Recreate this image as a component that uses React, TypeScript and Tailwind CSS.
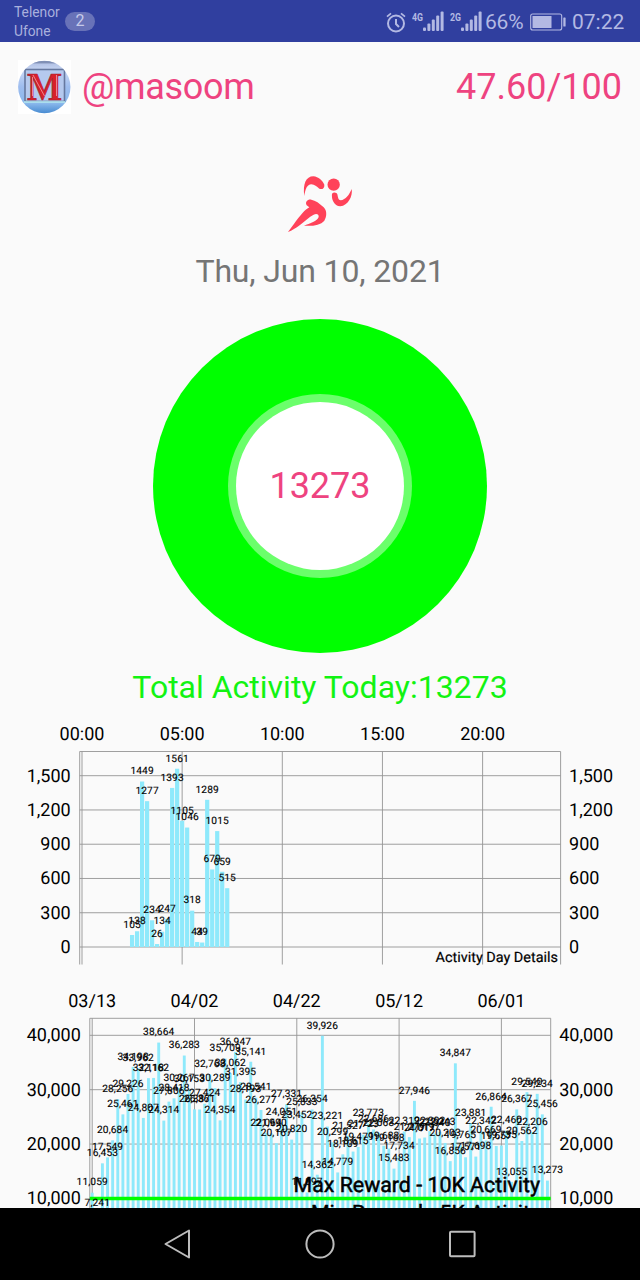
import type { ReactNode } from "react";

const DAY_START = 2.5;
const DAY_VALUES = [
  105, 138, 1449, 1277, 234, 26, 134, 247, 1393, 1561,
  1105, 1046, 318, 44, 39, 1289, 679, 1015, 659, 515,
];

const MONTH_VALUES = [
  11059, 7241, 16453, 17549, 20684, 28256, 25461, 29226, 34198, 33962,
  24807, 32118, 32162, 38664, 24314, 27806, 28418, 30267, 36283, 30153,
  26387, 26361, 27424, 32768, 30289, 24354, 35709, 33062, 36947, 31395,
  28193, 35141, 28541, 26277, 22064, 21990, 20167, 24051, 27331, 20820,
  23452, 25833, 11097, 26354, 14362, 39926, 23221, 20299, 14779, 18109,
  21527, 18615, 19479, 21723, 23773, 22686, 22063, 19683, 19168, 15483,
  17734, 22319, 21279, 27946, 21017, 21197, 22392, 21940, 22243, 20203,
  16856, 34847, 19765, 17571, 23881, 17698, 22342, 20669, 26864, 19657,
  19735, 22460, 13055, 26367, 20562, 29540, 22206, 29234, 25456, 13273,
];

type Tick = { at: number; label: string };

type ChartProps = {
  top: number;
  height: number;
  box: { left: number; right: number; top: number; bottom: number };
  xTicks: Tick[];
  yTicks: Tick[];
  bars: { x: number; y: number; label: string }[];
  barWidth: number;
  zero: number;
  children?: ReactNode;
};

function BarChart({ top, height, box, xTicks, yTicks, bars, barWidth, zero, children }: ChartProps) {
  return (
    <svg
      width="640"
      height={height}
      viewBox={`0 ${top} 640 ${height}`}
      className="block shrink-0"
      textRendering="geometricPrecision"
    >
      <g stroke="#949494" strokeWidth="0.9">
        {xTicks.map((t) => (
          <line key={t.label} x1={t.at} x2={t.at} y1={box.top} y2={box.bottom} />
        ))}
        {yTicks.map((t) => (
          <line key={t.label} x1={box.left} x2={box.right} y1={t.at} y2={t.at} />
        ))}
        <path
          d={`M${box.left} ${box.bottom}V${box.top}H${box.right}V${box.bottom}`}
          fill="none"
        />
      </g>

      <g fill="#8ee9fb">
        {bars.map((b) => (
          <rect key={b.x} x={b.x - barWidth / 2} y={b.y} width={barWidth} height={zero - b.y} />
        ))}
      </g>

      {children}

      <g fontSize="10.2" fill="#000" stroke="#000" strokeWidth="0.12" letterSpacing="0.1" textAnchor="middle">
        {bars.map((b) => (
          <text key={b.x} x={b.x} y={b.y - 7.2}>{b.label}</text>
        ))}
      </g>

      <g fontSize="18" fill="#000">
        {xTicks.map((t) => (
          <text key={t.label} x={t.at} y={box.top - 11.5} textAnchor="middle">{t.label}</text>
        ))}
        {yTicks.map((t) => (
          <g key={t.label}>
            <text x={box.left - 9} y={t.at + 6} textAnchor="end">{t.label}</text>
            <text x={box.right + 8.5} y={t.at + 6}>{t.label}</text>
          </g>
        ))}
      </g>
    </svg>
  );
}

function DayChart() {
  const y = (v: number) => 947 - v * 0.1142;
  return (
    <BarChart
      top={714}
      height={261}
      box={{ left: 79.7, right: 560.6, top: 751.5, bottom: 964.5 }}
      xTicks={[0, 5, 10, 15, 20].map((h) => ({
        at: 82 + h * 20.03,
        label: `${String(h).padStart(2, "0")}:00`,
      }))}
      yTicks={[0, 300, 600, 900, 1200, 1500].map((v) => ({ at: y(v), label: v.toLocaleString("en-US") }))}
      bars={DAY_VALUES.map((v, i) => ({
        x: 82 + (DAY_START + i * 0.25) * 20.03,
        y: y(v),
        label: String(v),
      }))}
      barWidth={4.2}
      zero={947}
    >
      <text
        x="435.5"
        y="962"
        fontSize="14.2"
        fill="#000"
        stroke="#000"
        strokeWidth="0.2"
        textLength="122.5"
        lengthAdjust="spacingAndGlyphs"
      >
        Activity Day Details
      </text>
    </BarChart>
  );
}

function MonthChart() {
  const y = (v: number) => 1252.8 - v * 0.005437;
  return (
    <BarChart
      top={975}
      height={290}
      box={{ left: 89.8, right: 550.7, top: 1018.3, bottom: 1265 }}
      xTicks={["03/13", "04/02", "04/22", "05/12", "06/01"].map((label, i) => ({
        at: 92.2 + i * 102.3,
        label,
      }))}
      yTicks={[10000, 20000, 30000, 40000].map((v) => ({ at: y(v), label: v.toLocaleString("en-US") }))}
      bars={MONTH_VALUES.map((v, i) => ({
        x: 92.2 + i * 5.115,
        y: y(v),
        label: v.toLocaleString("en-US"),
      }))}
      barWidth={2.9}
      zero={1252.8}
    >
      <line x1="89.8" x2="550.7" y1="1198.5" y2="1198.5" stroke="#00ff00" strokeWidth="3.6" />
      <g fontSize="21.2" fill="#000" stroke="#000" strokeWidth="0.5">
        <text x="293.5" y="1192.3" textLength="246.5" lengthAdjust="spacingAndGlyphs">
          Max Reward - 10K Activity
        </text>
        <text x="311" y="1219.5" textLength="229" lengthAdjust="spacingAndGlyphs">
          Min Reward - 5K Activity
        </text>
      </g>
    </BarChart>
  );
}

function Signal({ kind }: { kind: string }) {
  return (
    <svg width="33" height="24" viewBox="0 0 33 24" fill="#b3b9e3" className="block">
      <text x="0" y="10.5" fontSize="11" fontWeight="700" textLength="11" lengthAdjust="spacingAndGlyphs">
        {kind}
      </text>
      <rect x="11" y="17.5" width="3" height="3.5" rx="1" />
      <rect x="15.4" y="13.5" width="3" height="7.5" rx="1" />
      <rect x="19.8" y="9.5" width="3" height="11.5" rx="1" />
      <rect x="24.2" y="5.5" width="3" height="15.5" rx="1" />
      <rect x="28.6" y="1.5" width="3" height="19.5" rx="1" />
    </svg>
  );
}

function StatusBar() {
  return (
    <header className="flex h-[42px] shrink-0 items-center justify-between bg-[#303f9f] pr-[15px] pl-3.5 text-[#b3b9e3]">
      <div className="flex items-center">
        <div className="w-[51px] pt-0.5 text-[13.8px] leading-[19.5px] text-[#a9b0dd]">
          <div>Telenor</div>
          <div>Ufone</div>
        </div>
        <div className="grid h-[19px] w-[30px] place-content-center rounded-full bg-[#6872b8] text-[16px] leading-none text-[#c6caea]">
          2
        </div>
      </div>

      <div className="flex items-center pt-[2px] text-[21px]">
        <svg width="20" height="21" viewBox="0 0 20 21" fill="none" stroke="#b3b9e3" strokeWidth="2" className="mr-[6px] block">
          <circle cx="10" cy="11.5" r="8" />
          <path d="M10 7v5l3 3" />
          <path d="M1 4.6 5 1.4M19 4.6 15 1.4" strokeWidth="1.8" />
        </svg>
        <Signal kind="4G" />
        <div className="w-[5px]" />
        <Signal kind="2G" />
        <span className="ml-[2px] w-[45px] leading-none tracking-[-0.2px] whitespace-nowrap">66%</span>
        <svg width="36" height="18" viewBox="0 0 36 18" className="mr-[6px] block">
          <rect x="0.7" y="1" width="31" height="16" rx="2" fill="none" stroke="#b3b9e3" strokeWidth="1.1" />
          <rect x="2.5" y="3" width="19" height="12" fill="#b3b9e3" />
          <rect x="33.3" y="4.5" width="2.3" height="9" rx="0.6" fill="#b3b9e3" />
        </svg>
        <span className="w-[53px] leading-none whitespace-nowrap">07:22</span>
      </div>
    </header>
  );
}

function Avatar() {
  return (
    <svg width="53" height="54" viewBox="0 0 53 54" className="block bg-white">
      <defs>
        <linearGradient id="sky" x1="0" y1="0" x2="0" y2="1">
          <stop offset="0" stopColor="#a9b8de" />
          <stop offset="0.2" stopColor="#c9d8f5" />
          <stop offset="0.5" stopColor="#9dbcee" />
          <stop offset="0.8" stopColor="#8bb8ec" />
          <stop offset="1" stopColor="#4288cf" />
        </linearGradient>
        <clipPath id="round">
          <circle cx="26.3" cy="27" r="26.2" />
        </clipPath>
      </defs>
      <g clipPath="url(#round)">
        <rect width="53" height="54" fill="url(#sky)" />
        <rect x="5" y="1" width="43" height="2.4" fill="#8090b5" />
        <rect x="7" y="9.5" width="39.5" height="32" fill="#b5c9ee" stroke="#66789f" strokeWidth="1.6" />
        <path d="M6 42h41" stroke="#b9f0f8" strokeWidth="1.6" />
      </g>
      <text
        x="26.5"
        y="39.5"
        fontFamily="Liberation Serif, serif"
        fontSize="40"
        fontWeight="700"
        textAnchor="middle"
        textLength="35"
        lengthAdjust="spacingAndGlyphs"
        fill="#d8202c"
        stroke="#a3222f"
        strokeWidth="0.7"
      >
        M
      </text>
      <path d="M15 15l11.5 21M38.5 15v21M14.5 17v19" stroke="#efa2aa" strokeWidth="0.8" fill="none" />
    </svg>
  );
}

function Runner() {
  return (
    <svg width="100" height="90" viewBox="0 0 300 270" fill="#ff4259" className="block">
      <path d="M103 108C98 72 108 49 130 49C146 51 157 61 163 74C164 85 156 90 148 86C140 80 134 74 124 73C111 74 106 87 103 108Z" />
      <circle cx="191" cy="74" r="18.5" />
      <path d="M186 101C191 95 200 97 202 103C204 112 205 121 212 121C227 119 238 104 245 87C249 108 234 137 211 139C191 137 184 117 186 101Z" />
      <path d="M110 136C104 125 114 117 124 119C136 121 149 130 161 142C172 153 170 171 163 182C151 196 126 199 102 197C120 190 142 183 146 171C147 163 140 160 131 164C117 171 104 184 90 195C77 205 67 211 54 216C69 197 87 169 103 153C109 148 114 145 118 142Z" />
    </svg>
  );
}

function StepRing({ steps }: { steps: number }) {
  return (
    <div className="grid size-[334px] place-content-center rounded-full bg-[#00ff00]">
      <div className="grid size-[184px] place-content-center rounded-full bg-[#6bff6b]">
        <div className="grid size-[168px] place-content-center rounded-full bg-white text-[36px] leading-none text-[#ee4380]">
          {steps}
        </div>
      </div>
    </div>
  );
}

function NavBar() {
  return (
    <nav className="flex h-[72px] shrink-0 items-center justify-center gap-[111px] bg-black">
      <svg width="31" height="32" viewBox="0 0 31 32" fill="none" stroke="#bdbdbd" strokeWidth="2" strokeLinejoin="round" className="block">
        <path d="M3.5 16 27 2.5v27Z" />
      </svg>
      <svg width="32" height="32" viewBox="0 0 32 32" fill="none" stroke="#bdbdbd" strokeWidth="2" className="block">
        <circle cx="16" cy="16" r="13.6" />
      </svg>
      <svg width="31" height="32" viewBox="0 0 31 32" fill="none" stroke="#bdbdbd" strokeWidth="2" className="block">
        <rect x="3" y="3.7" width="24.6" height="24.6" rx="1" />
      </svg>
    </nav>
  );
}

export default function App() {
  return (
    <div className="flex h-[1280px] w-[640px] flex-col overflow-hidden bg-[#fafafa] font-['Roboto',sans-serif]">
      <StatusBar />

      <main className="flex min-h-0 flex-1 flex-col overflow-hidden">
        <div className="mt-[18px] flex h-[54px] shrink-0 items-center justify-between pr-[18px] pl-[18px] text-[36px] leading-none text-[#ee4380]">
          <div className="flex items-center gap-[11px]">
            <Avatar />
            <span className="tracking-[-0.3px]">@masoom</span>
          </div>
          <span>47.60/100</span>
        </div>

        <div className="mt-[46px] flex h-[554px] shrink-0 flex-col items-center">
          <Runner />
          <div className="mt-[1px] h-[40px] text-[32px] leading-[40px] tracking-[-0.15px] whitespace-nowrap text-[#757575]">
            Thu, Jun 10, 2021
          </div>
          <div className="mt-[27.5px]">
            <StepRing steps={13273} />
          </div>
          <div className="mt-[14.5px] h-[40px] text-[32px] leading-[40px] whitespace-nowrap text-[#12f312]">
            Total Activity Today:13273
          </div>
        </div>

        <DayChart />
        <MonthChart />
      </main>

      <NavBar />
    </div>
  );
}
